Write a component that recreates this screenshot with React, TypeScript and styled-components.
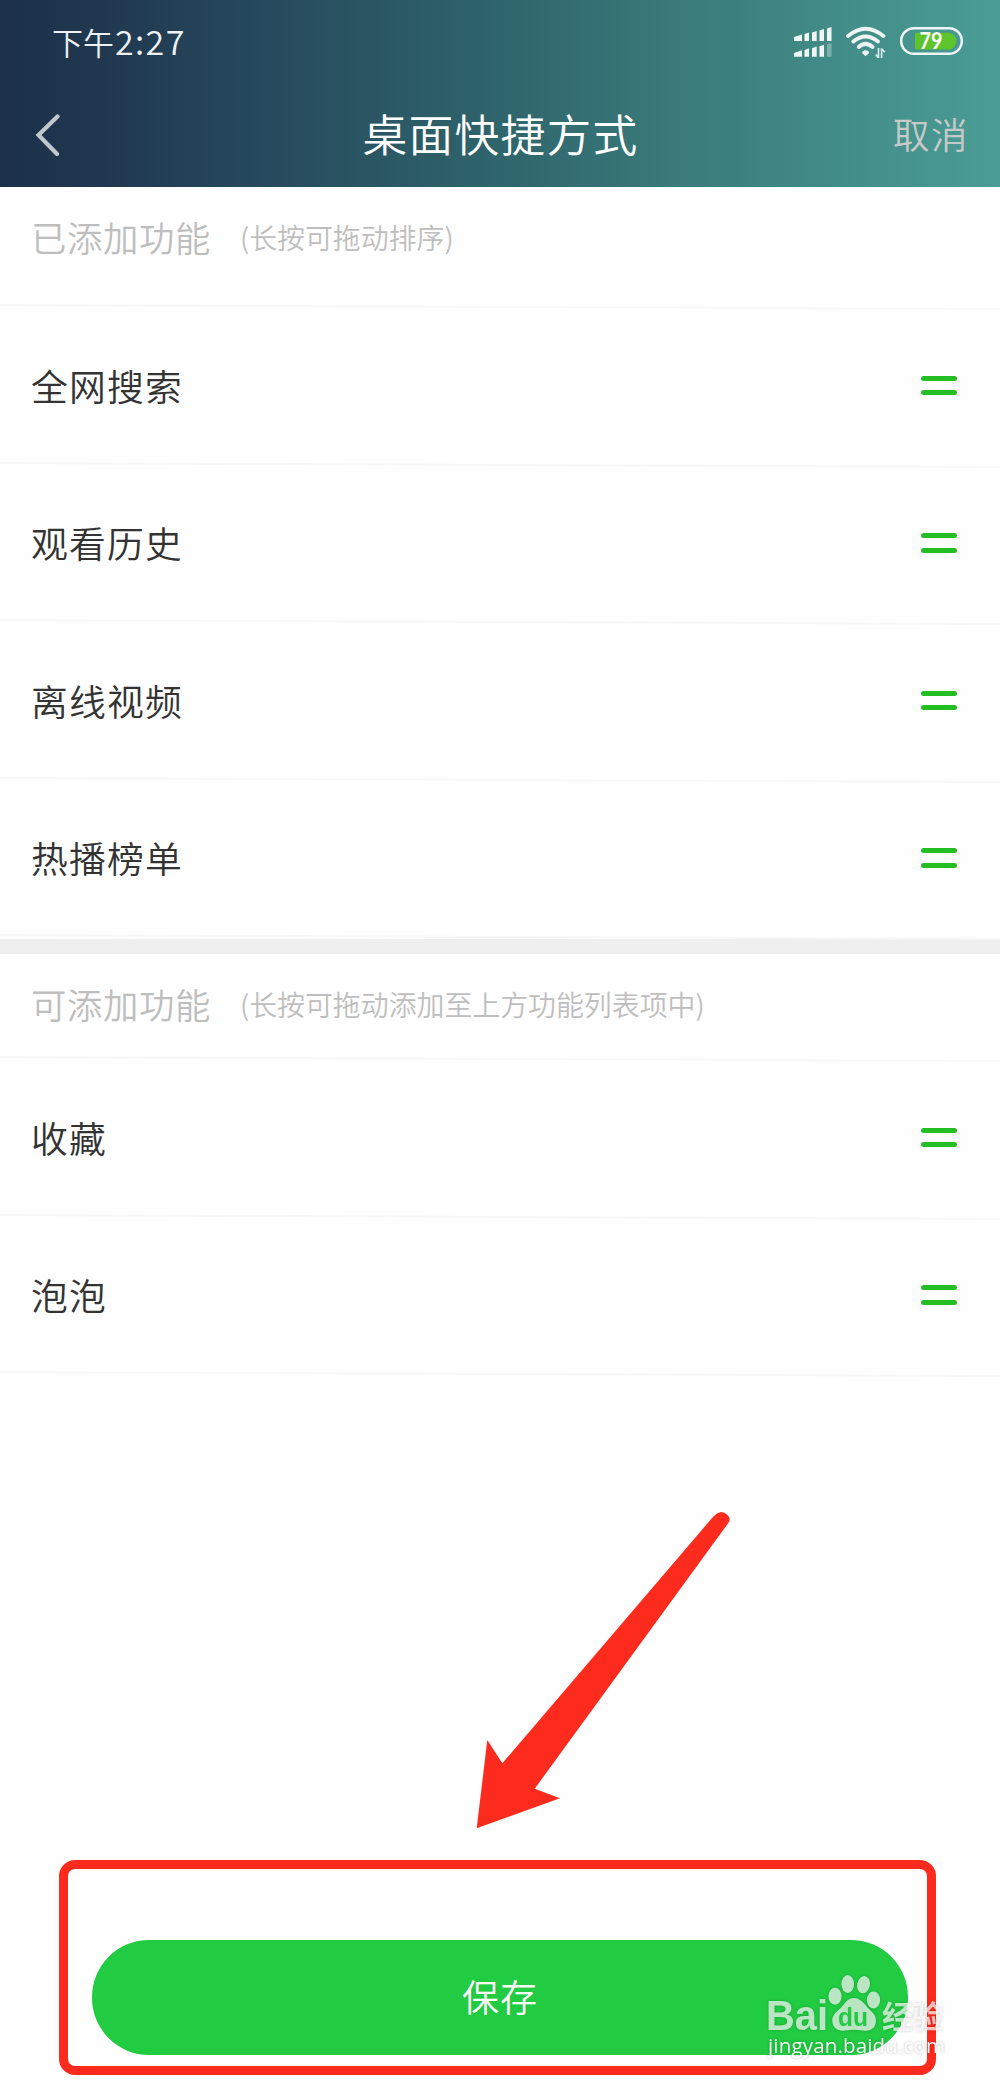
import React from "react";
import styled, { createGlobalStyle } from "styled-components";

const GlobalStyle = createGlobalStyle`
  * { box-sizing: border-box; }
  body { margin: 0; background: #fefefe; }
`;

const Screen = styled.div`
  position: relative;
  display: flex;
  flex-direction: column;
  width: 1000px;
  height: 2081px;
  overflow: hidden;
  background: #fefefe;
  font-family: "Noto Sans CJK SC", "Noto Sans", sans-serif;
  font-weight: 350;
`;

const Header = styled.header`
  display: flex;
  flex-direction: column;
  height: 187px;
  flex: none;
  background: linear-gradient(90deg, #1c3049 0%, #20384f 10%, #26485c 25%, #2f656c 50%, #3e8380 75%, #4a9d95 100%);
`;

const StatusBar = styled.div`
  display: flex;
  align-items: center;
  justify-content: space-between;
  height: 83px;
  padding: 0 36px 0 52px;
`;

const Clock = styled.div`
  display: flex;
  align-items: baseline;
  margin-top: -1px;
  color: #eef2f4;
  font-size: 31px;
  line-height: 83px;
`;

const Digits = styled.span`
  margin-left: 1px;
  font-size: 34px;
  letter-spacing: 1.4px;
`;

const StatusIcons = styled.div`
  display: flex;
  align-items: center;
`;

const NavBar = styled.nav`
  display: grid;
  grid-template-columns: 200px 1fr 200px;
  align-items: center;
  height: 104px;
  padding-bottom: 1px;
`;

const BackButton = styled.button`
  display: flex;
  padding: 0 0 0 34px;
  border: 0;
  background: none;
`;

const Title = styled.h1`
  margin: -3px 0 0;
  text-align: center;
  color: #fff;
  font-size: 44.8px;
  letter-spacing: 1.2px;
  text-indent: 1.2px;
  line-height: 60px;
  font-weight: inherit;
`;

const CancelButton = styled.button`
  margin-top: -1px;
  padding: 0 31px 0 0;
  border: 0;
  background: none;
  color: #c6c9ca;
  font: inherit;
  font-size: 36.5px;
  letter-spacing: 1.5px;
  line-height: 50px;
  text-align: right;
`;

const SectionHead = styled.div<{ $height: number; $lift?: number }>`
  display: flex;
  align-items: center;
  flex: none;
  gap: 29px;
  height: ${(p) => p.$height}px;
  padding: 0 31px ${(p) => p.$lift ?? 0}px;
  color: #bebebe;
`;

const SectionName = styled.h2`
  margin: 0;
  font-size: 35.4px;
  letter-spacing: 0.6px;
  line-height: 48px;
  font-weight: inherit;
`;

const SectionHint = styled.span`
  font-size: 27.9px;
  line-height: 40px;
`;

const List = styled.ul`
  display: flex;
  flex-direction: column;
  flex: none;
  margin: 0;
  padding: 0;
  list-style: none;
`;

const Divider = styled.div`
  flex: none;
  height: 2px;
  margin-bottom: -2px;
  background: #f7f7f7;
  transform: skewY(0.23deg);
  transform-origin: 0 0;
`;

const Row = styled.li`
  display: flex;
  align-items: center;
  justify-content: space-between;
  height: 157.5px;
  padding: 5px 43px 0 31px;
`;

const RowLabel = styled.span`
  margin-top: -1px;
  color: #333;
  font-size: 36.8px;
  letter-spacing: 1.2px;
  line-height: 52px;
`;

const DragHandle = styled.span`
  display: flex;
  flex-direction: column;
  gap: 9.5px;
  width: 36px;

  &::before,
  &::after {
    content: "";
    height: 5px;
    border-radius: 2.5px;
    background: #24bd24;
  }
`;

const Band = styled.div`
  flex: none;
  height: 15px;
  margin-top: 5px;
  background: #efefef;
`;

const Footer = styled.footer`
  display: flex;
  margin-top: auto;
  padding: 0 92px 26px;
`;

const SaveButton = styled.button`
  flex: 1;
  height: 115px;
  padding: 0 0 3px;
  border: 0;
  border-radius: 57px;
  background: #21cb42;
  color: #fff;
  font: inherit;
  font-size: 37px;
  letter-spacing: 1px;
`;

const HighlightFrame = styled.div`
  position: absolute;
  left: 59px;
  top: 1860px;
  width: 877px;
  height: 215px;
  border: 9px solid #fc2b1d;
  border-radius: 16px;
`;

const Arrow = styled.svg`
  position: absolute;
  left: 470px;
  top: 1505px;
`;

const Watermark = styled.svg`
  position: absolute;
  left: 760px;
  top: 1965px;
  filter: drop-shadow(0 0 1.5px rgba(0, 0, 0, 0.28));
`;

const added = ["全网搜索", "观看历史", "离线视频", "热播榜单"];
const available = ["收藏", "泡泡"];

function StatusGlyphs() {
  return (
    <svg width="170" height="36" viewBox="0 0 170 36" fill="none">
      <g fill="#eef5f4">
        <path d="M0 13 8 10.5V17H0ZM10.5 10 15 8.5V17H10.5ZM18 8.5 22.7 7V17H18ZM25.5 6.5 30 5V17H25.5ZM33 4.5 37.5 3V17H33Z" />
        <path d="M0 29 8 26.2V32.8H0ZM10.5 26 15 24.3V32.8H10.5ZM18 24.2 22.7 22.5V32.8H18ZM25.5 22.3 30 20.7V32.8H25.5Z" />
        <path d="M33 20.2 37.5 19V32.8H33Z" opacity=".35" />
        <path d="M68 29 71.6 32.3 75.2 29A3.7 3.7 0 0 0 68 29Z" />
      </g>
      <g stroke="#eef5f4" strokeWidth="3.9" strokeLinecap="round">
        <path d="M54 12Q71.6-2.7 89.4 12" />
        <path d="M59.3 17.5Q71.6 7.3 84 17.5" />
        <path d="M64.7 23Q71.6 16.7 78.6 23" />
      </g>
      <path d="M84.5 24V34M81.8 30.6 84 33.5M87.6 34V24.2M88 25.2 90.8 28.3" stroke="#dcebe9" strokeWidth="1.7" />
      <rect x="107.2" y="4.2" width="60.6" height="25.6" rx="12.8" stroke="#eef5f4" strokeWidth="2.5" />
      <path d="M122.5 8.7H155A8.4 8.4 0 0 1 155 25.4H122.5Q121 25.4 121 23.9V10.2Q121 8.7 122.5 8.7Z" fill="#5dc42c" />
      <text x="125.5" y="25" fill="#fff" fontFamily="Lato, sans-serif" fontWeight="700" fontSize="22.5" textLength="23" lengthAdjust="spacingAndGlyphs">79</text>
    </svg>
  );
}

function FeatureList({ items }: { items: string[] }) {
  return (
    <List>
      {items.map((name) => (
        <React.Fragment key={name}>
          <Divider as="li" />
          <Row>
            <RowLabel>{name}</RowLabel>
            <DragHandle />
          </Row>
        </React.Fragment>
      ))}
      <Divider as="li" />
    </List>
  );
}

export default function App() {
  return (
    <Screen>
      <GlobalStyle />
      <Header>
        <StatusBar>
          <Clock>
            下午<Digits>2:27</Digits>
          </Clock>
          <StatusIcons>
            <StatusGlyphs />
          </StatusIcons>
        </StatusBar>
        <NavBar>
          <BackButton aria-label="返回">
            <svg width="28" height="42" viewBox="0 0 28 42" fill="none">
              <path d="M23.5 2.5 4.5 21 23 40" stroke="#c0c7cd" strokeWidth="4.2" strokeLinecap="round" />
            </svg>
          </BackButton>
          <Title>桌面快捷方式</Title>
          <CancelButton>取消</CancelButton>
        </NavBar>
      </Header>

      <SectionHead $height={117} $lift={18}>
        <SectionName>已添加功能</SectionName>
        <SectionHint>(长按可拖动排序)</SectionHint>
      </SectionHead>
      <FeatureList items={added} />

      <Band />
      <SectionHead $height={102} $lift={2}>
        <SectionName>可添加功能</SectionName>
        <SectionHint>(长按可拖动添加至上方功能列表项中)</SectionHint>
      </SectionHead>
      <FeatureList items={available} />

      <Footer>
        <SaveButton>保存</SaveButton>
      </Footer>

      <HighlightFrame />
      <Arrow width="270" height="330" viewBox="470 1505 270 330">
        <path
          d="M476.7 1828.3 487.3 1740 502.3 1763.3 712.5 1517.5Q716.5 1512.8 721 1512Q724.5 1512 727.5 1515Q731.5 1519 728.3 1523L534.7 1788.7 560 1798.3Z"
          fill="#fc2b1d"
        />
      </Arrow>
      <Watermark width="200" height="100" viewBox="760 1965 200 100">
        <g fill="#fff" fillOpacity=".7">
          <text x="766" y="2030" fontFamily="Liberation Sans, sans-serif" fontWeight="700" fontSize="42" textLength="62" lengthAdjust="spacingAndGlyphs">Bai</text>
          <ellipse cx="835" cy="1996.3" rx="6.5" ry="8.5" />
          <ellipse cx="847.7" cy="1984" rx="6.3" ry="9" />
          <ellipse cx="863.5" cy="1984.7" rx="6.3" ry="8.7" transform="rotate(12 863.5 1984.7)" />
          <ellipse cx="873.5" cy="2000" rx="6.6" ry="8.5" />
          <path d="M854 1998C861 1998 865 2005 869 2009C874 2013.500 876.500 2017 875.800 2022C875 2029 869.500 2031.500 863 2030.500Q854 2029 845 2030.500C838 2031.500 832.700 2028 832.300 2021C832 2014 838 2011 842 2006.500C845.500 2002.500 848 1998 854 1998Z" />
        </g>
        <text x="838" y="2026" fill="#21cb42" fontFamily="Liberation Sans, sans-serif" fontWeight="700" fontSize="26" textLength="30" lengthAdjust="spacingAndGlyphs">du</text>
        <g fill="#fff" fillOpacity=".7">
          <text x="882" y="2028" fontFamily="Noto Sans CJK SC, sans-serif" fontWeight="700" fontSize="31" textLength="61">经验</text>
          <text x="768" y="2053" fontFamily="Open Sans, sans-serif" fontWeight="500" fontSize="20.5" fillOpacity=".95" textLength="177">jingyan.baidu.com</text>
        </g>
      </Watermark>
    </Screen>
  );
}
